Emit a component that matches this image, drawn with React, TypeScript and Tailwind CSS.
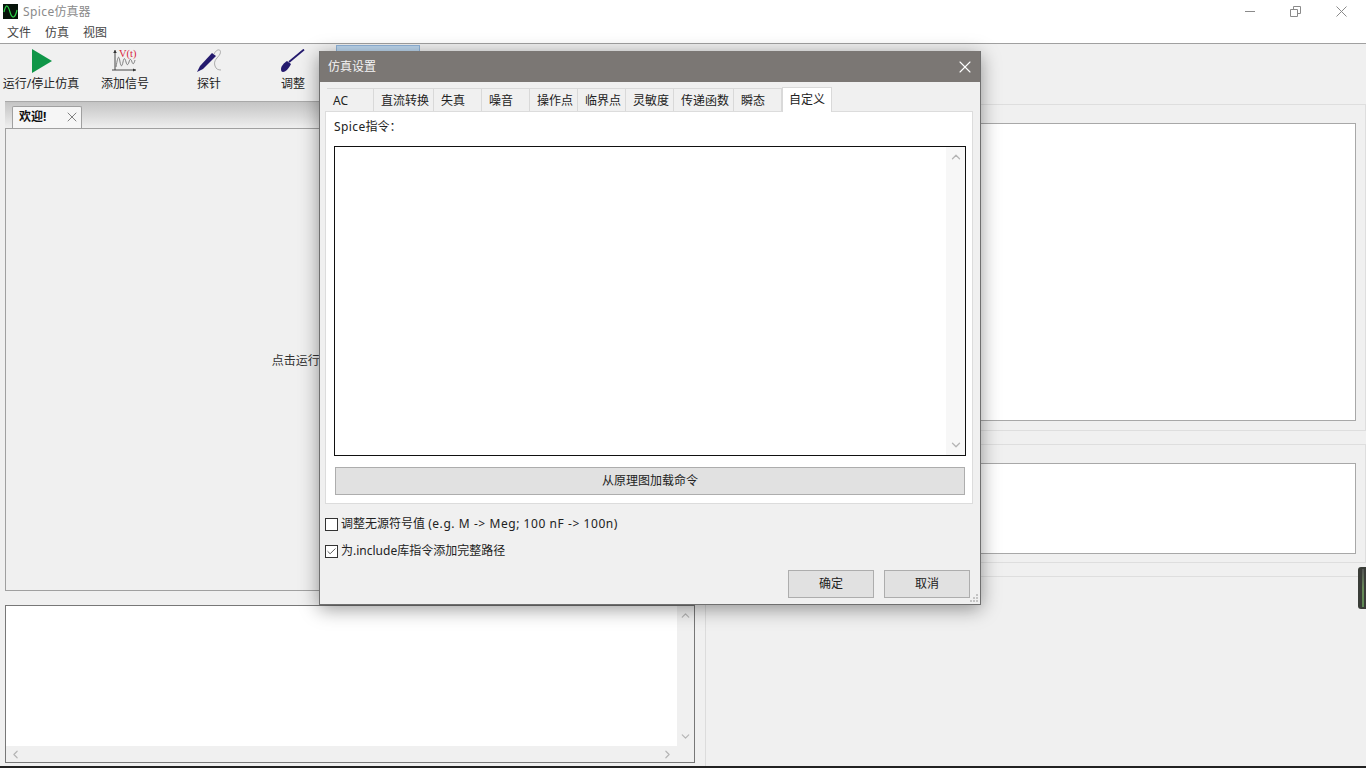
import { ChevronUp, ChevronDown, ChevronLeft, ChevronRight, Check, X } from "lucide-react";

const tabs = [
  { label: "AC", width: "w-[47px]", pad: "pl-[6px]" },
  { label: "直流转换", width: "w-[60px]", pad: "pl-[7px]" },
  { label: "失真", width: "w-[48px]", pad: "pl-[7px]" },
  { label: "噪音", width: "w-[48px]", pad: "pl-[7px]" },
  { label: "操作点", width: "w-[48px]", pad: "pl-[7px]" },
  { label: "临界点", width: "w-[48px]", pad: "pl-[7px]" },
  { label: "灵敏度", width: "w-[48px]", pad: "pl-[7px]" },
  { label: "传递函数", width: "w-[60px]", pad: "pl-[7px]" },
  { label: "瞬态", width: "w-[48px]", pad: "pl-[7px]" },
];

function PlayIcon() {
  return (
    <svg width="24" height="24" viewBox="0 0 24 24">
      <path d="M3 0 L23 12 L3 24 Z" fill="#0f9648" />
    </svg>
  );
}

function SignalIcon() {
  return (
    <svg width="26" height="24" viewBox="0 0 26 24">
      <path d="M3 1 V21 M0 21 H24" stroke="#333" strokeWidth="0.9" fill="none" />
      <path d="M1.2 4 L3 1 L4.8 4 Z M21 19.5 L24 21 L21 22.5 Z" fill="#333" />
      <path d="M4 18 C6 6 7 6 8 13 C9 18 10 18 11 13 C12 8 13 9 14 13 C15 17 16 16 17 13 C18 9 19 10 20 13 C21 16 22 15 23 11" stroke="#666" strokeWidth="0.8" fill="none" />
      <text x="7" y="8" fontFamily="'Liberation Serif', serif" fontSize="10.5" fill="#d8243c">V(t)</text>
    </svg>
  );
}

function ProbeIcon() {
  return (
    <svg width="26" height="24" viewBox="0 0 26 24">
      <path d="M1 23 L4 17 L16 4 L20 7 L7 20 Z" fill="#241a6e" />
      <path d="M18 5 C21 -1 26 0 24 5 C22 9 17 11 19 17 C20 20 22 21 25 21" stroke="#999" strokeWidth="0.8" fill="none" />
    </svg>
  );
}

function TuneIcon() {
  return (
    <svg width="26" height="24" viewBox="0 0 26 24">
      <path d="M1 20 C1 17 4 14 7 12 L11 15 C9 19 6 23 3 23 C1.5 23 1 22 1 20 Z" fill="#241a6e" />
      <path d="M9 13 L24 0.5" stroke="#241a6e" strokeWidth="1.8" fill="none" />
    </svg>
  );
}

function AppIcon() {
  return (
    <svg width="15" height="15" viewBox="0 0 15 15">
      <rect width="15" height="15" fill="#07140a" />
      <path d="M1 8 C3 -1 5 1 7 8 C9 15 12 15 14 6" stroke="#2fd04a" strokeWidth="1.2" fill="none" />
    </svg>
  );
}

function ToolButton({ icon, label }: { icon?: React.ReactNode; label?: string }) {
  return (
    <div className="flex h-full w-[84px] flex-col items-center pt-[5px]">
      <div className="flex h-[24px] items-center justify-center">{icon}</div>
      <span className="mt-[3px] whitespace-nowrap leading-[16px]">{label}</span>
    </div>
  );
}

function Button({ children, className }: { children: React.ReactNode; className: string }) {
  return (
    <div className={`flex items-center justify-center border border-[#adadad] bg-[#e1e1e1] text-[#222] ${className}`}>
      {children}
    </div>
  );
}

function SettingsDialog() {
  return (
    <div className="absolute left-[319px] top-[51px] flex h-[554px] w-[662px] flex-col border border-t-0 border-[#6f6f6f] bg-[#f0f0f0] shadow-[0_4px_18px_rgba(0,0,0,0.4)]">
      <div className="flex h-[31px] shrink-0 items-center justify-between bg-[#7b7774] pl-[8px] pr-[5px] text-[#f4f4f4]">
        <span>仿真设置</span>
        <X size={20} strokeWidth={1.3} className="text-white" />
      </div>

      <div className="flex h-[29px] shrink-0 items-end pl-[7px]">
        {tabs.map((tab) => (
          <div
            key={tab.label}
            className={`flex h-[23px] items-center border-t border-r border-[#d9d9d9] bg-[#f0f0f0] pt-[2px] ${tab.pad} ${tab.width}`}
          >
            {tab.label}
          </div>
        ))}
        <div className="relative z-10 -mb-px flex h-[25px] w-[50px] items-center border-x border-t border-[#d9d9d9] bg-white pb-[1px] pl-[6px]">
          自定义
        </div>
      </div>

      <div className="ml-[5px] flex h-[393px] w-[648px] shrink-0 flex-col border border-[#dcdcdc] bg-white">
        <div className="ml-[8px] mt-[6px] h-[28px] leading-[18px]">
          <span className="tracking-[0.4px]">Spice</span>指令：
        </div>
        <div className="ml-[8px] flex h-[310px] w-[632px] border border-[#111]">
          <div className="flex-1" />
          <div className="flex w-[19px] flex-col items-center justify-between bg-[#f7f7f7] py-[3px] text-[#b5b5b5]">
            <ChevronUp size={14} strokeWidth={2.2} />
            <ChevronDown size={14} strokeWidth={2.2} />
          </div>
        </div>
        <Button className="ml-[9px] mt-[11px] h-[28px] w-[630px]">从原理图加载命令</Button>
      </div>

      <div className="ml-[5px] mt-[13px] flex h-[14px] items-center gap-[3px]">
        <div className="h-[13px] w-[13px] border border-[#333] bg-white" />
        <span className="whitespace-nowrap">
          调整无源符号值 <span className="tracking-[0.56px]">(e.g. M -&gt; Meg; 100 nF -&gt; 100n)</span>
        </span>
      </div>
      <div className="ml-[5px] mt-[13px] flex h-[14px] items-center gap-[3px]">
        <div className="flex h-[13px] w-[13px] items-center justify-center border border-[#333] bg-white">
          <Check size={11} strokeWidth={1.6} className="text-[#222]" />
        </div>
        <span className="whitespace-nowrap">为.include库指令添加完整路径</span>
      </div>

      <div className="mt-[12px] flex justify-end gap-[10px] pr-[10px]">
        <Button className="h-[28px] w-[86px]">确定</Button>
        <Button className="h-[28px] w-[86px]">取消</Button>
      </div>

      {/* resize grip */}
      <svg className="absolute bottom-[1px] right-[1px]" width="9" height="9" viewBox="0 0 9 9" fill="#c4c4c4">
        <rect x="6" y="0" width="2" height="2" />
        <rect x="3" y="3" width="2" height="2" />
        <rect x="6" y="3" width="2" height="2" />
        <rect x="0" y="6" width="2" height="2" />
        <rect x="3" y="6" width="2" height="2" />
        <rect x="6" y="6" width="2" height="2" />
      </svg>
    </div>
  );
}

export default function App() {
  return (
    <div className="relative flex h-[768px] w-[1366px] flex-col overflow-hidden bg-[#f0f0f0] font-['Noto_Sans','Noto_Sans_CJK_SC',sans-serif] text-[12px] text-[#222]">
      {/* title bar */}
      <div className="flex h-[23px] shrink-0 items-center bg-white pl-[3px]">
        <AppIcon />
        <span className="ml-[5px] text-[#8a8a8a]">
          <span className="tracking-[0.4px]">Spice</span>仿真器
        </span>
        <div className="ml-auto flex items-center gap-[35px] pr-[19px] text-[#8a8a8a]">
          <div className="h-px w-[10px] bg-[#8a8a8a]" />
          <svg width="11" height="11" viewBox="0 0 11 11" fill="none" stroke="#8a8a8a">
            <path d="M0.5 3.5 H7.5 V10.5 H0.5 Z M3.5 3.5 V0.5 H10.5 V7.5 H7.5" />
          </svg>
          <svg width="11" height="11" viewBox="0 0 11 11" fill="none" stroke="#8a8a8a">
            <path d="M0.5 0.5 L10.5 10.5 M10.5 0.5 L0.5 10.5" />
          </svg>
        </div>
      </div>

      {/* menu */}
      <div className="flex h-[20px] shrink-0 items-center gap-[14px] bg-white pl-[7px] text-[#444]">
        <span>文件</span>
        <span>仿真</span>
        <span>视图</span>
      </div>
      <div className="h-px shrink-0 bg-[#a0a0a0]" />

      {/* toolbar */}
      <div className="-ml-px flex h-[57px] shrink-0">
        <ToolButton icon={<PlayIcon />} label="运行/停止仿真" />
        <ToolButton icon={<SignalIcon />} label="添加信号" />
        <ToolButton icon={<ProbeIcon />} label="探针" />
        <ToolButton icon={<TuneIcon />} label="调整" />
        <div className="ml-px mt-px h-[20px] w-[84px] border border-[#8fb3d8] bg-[#bcd6ee]" />
      </div>

      <div className="flex min-h-0 flex-1">
        {/* left column */}
        <div className="ml-[5px] flex w-[690px] shrink-0 flex-col">
          <div className="flex h-[27px] shrink-0 items-end border-t border-[#a8a8a8] bg-gradient-to-b from-[#c4c4c4] to-[#efefef] pl-[7px]">
            <div className="-mb-px flex h-[23px] w-[70px] items-center justify-between rounded-t-[2px] border border-[#a0a0a0] border-b-[#f0f0f0] bg-[#f6f6f6] pb-[1px] pl-[6px] pr-[1px]">
              <span className="font-bold text-[#111]">欢迎!</span>
              <X size={16} strokeWidth={1.1} className="text-[#555]" />
            </div>
          </div>
          <div className="flex h-[463px] shrink-0 items-center justify-center border border-[#a0a0a0] pr-[8px] pt-[2px] text-[#333]">
            点击运行/停止仿真按钮开始
          </div>
          <div className="mt-[14px] flex h-[158px] shrink-0 flex-col border border-[#777]">
            <div className="flex min-h-0 flex-1">
              <div className="flex-1 bg-white" />
              <div className="flex w-[17px] flex-col items-center justify-between py-[3px] text-[#b5b5b5]">
                <ChevronUp size={13} strokeWidth={2.2} />
                <ChevronDown size={13} strokeWidth={2.2} />
              </div>
            </div>
            <div className="flex h-[16px] shrink-0 items-center justify-between pl-[3px] pr-[20px] text-[#b5b5b5]">
              <ChevronLeft size={13} strokeWidth={2.2} />
              <ChevronRight size={13} strokeWidth={2.2} />
            </div>
          </div>
        </div>

        {/* right column */}
        <div className="ml-[10px] flex flex-1 flex-col border-l border-[#dcdcdc] pt-[3px]">
          <div className="h-[327px] shrink-0 border-y border-r border-[#dedede] pl-[10px] pr-[9px] pt-[18px]">
            <div className="h-[298px] border border-[#a8a8a8] bg-white" />
          </div>
          <div className="mt-[13px] h-[119px] shrink-0 border-y border-r border-[#dedede] pl-[10px] pr-[9px] pt-[18px]">
            <div className="h-[91px] border border-[#a8a8a8] bg-white" />
          </div>
          <div className="h-[14px] shrink-0 border-b border-[#dedede]" />
        </div>
      </div>

      {/* taskbar sliver */}
      <div className="h-[2px] shrink-0 bg-[#222]" />

      {/* floating meter at the screen edge */}
      <div className="absolute left-[1358px] top-[567px] flex h-[42px] w-[8px] justify-center rounded-l-[3px] bg-[#3a3d38] pl-px">
        <div className="mt-[2px] h-[38px] w-[2px] bg-gradient-to-b from-[#555] via-[#6a8a5a] to-[#5f8a55]" />
      </div>

      <SettingsDialog />
    </div>
  );
}
